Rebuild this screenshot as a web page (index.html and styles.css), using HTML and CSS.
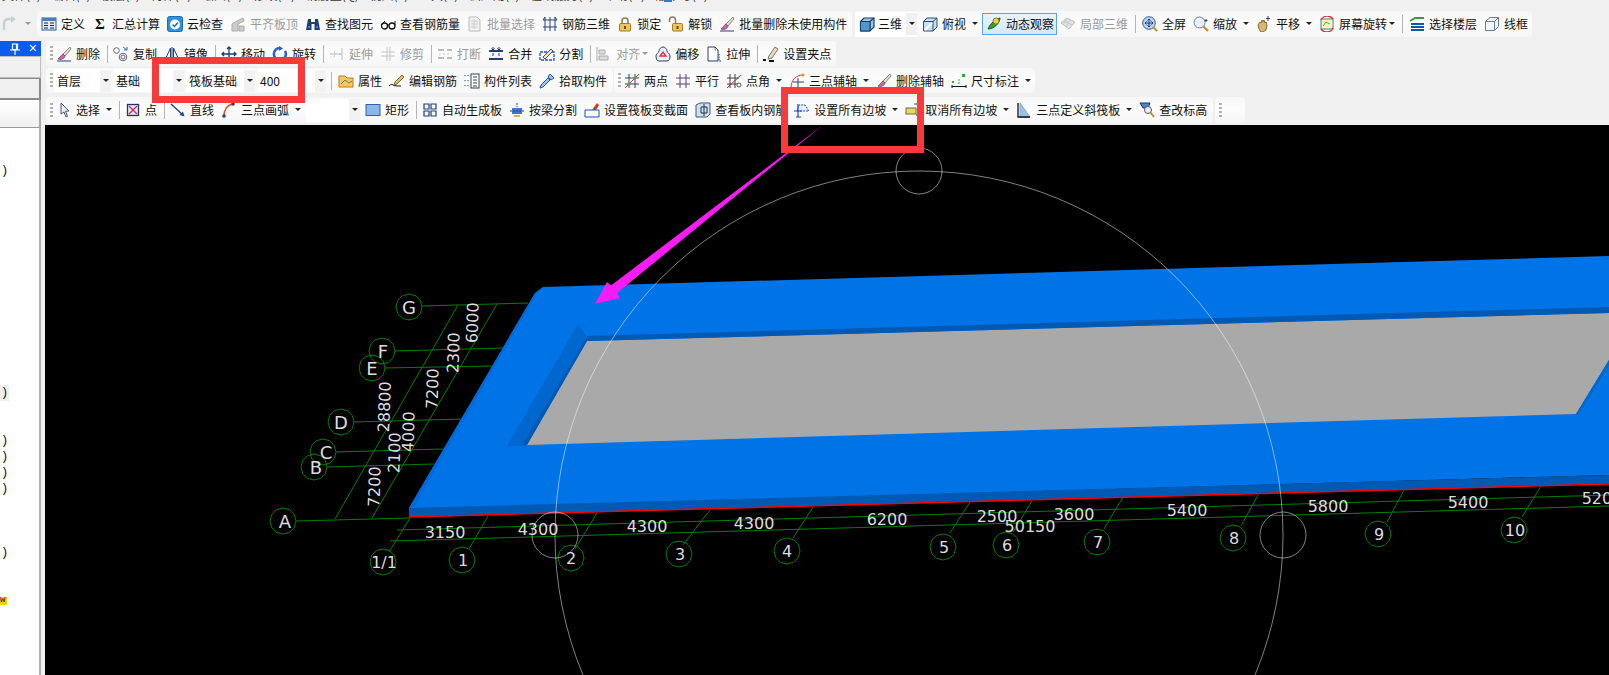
FILE: index.html
```html
<!DOCTYPE html>
<html lang="zh">
<head>
<meta charset="utf-8">
<title>筏板基础</title>
<link rel="stylesheet" href="styles.css">
</head>
<body>
<svg class="defs" width="0" height="0" aria-hidden="true">
<symbol id="def" viewBox="0 0 16 16"><rect x="1" y="2" width="14" height="12" fill="#e4edf7" stroke="#2a5a96"/><rect x="1" y="2" width="14" height="3" fill="#4a7fc0"/><path d="M3 7h4M3 9.500h4M3 12h4M9 7h4M9 9.500h4M9 12h4" stroke="#223"/></symbol>
<symbol id="cloud" viewBox="0 0 16 16"><rect x="0.500" y="0.500" width="15" height="15" rx="2" fill="#2e8fe0" stroke="#1b6db5"/><circle cx="8" cy="8.500" r="5" fill="#fff"/><path d="M5.500 8.500l2 2 3.500-4" fill="none" stroke="#1b6db5" stroke-width="1.500"/></symbol>
<symbol id="aligntop" viewBox="0 0 16 16"><path d="M2 15V8l5-3 6-3 1 3-6 3v7zM9 15v-5h5v5z" fill="#ccc" stroke="#aaa"/></symbol>
<symbol id="binoc" viewBox="0 0 16 16"><path d="M3 3h3v3h4V3h3l2 11H9.500V8h-3v6H1z" fill="#1d3f78"/><path d="M3 11h2M11 11h2" stroke="#9db9e0"/></symbol>
<symbol id="glass" viewBox="0 0 16 16"><circle cx="4.500" cy="10" r="3" fill="none" stroke="#111" stroke-width="1.300"/><circle cx="12" cy="10" r="3" fill="none" stroke="#111" stroke-width="1.300"/><path d="M7.500 9h1.500M1.500 9L5 5M15 9V5" stroke="#111"/></symbol>
<symbol id="batch" viewBox="0 0 16 16"><path d="M2 1h8l3 3v11H2z" fill="#f2f2f2" stroke="#bbb"/><path d="M4 5h7M4 8h7M4 11h7M7 3v10" stroke="#ccc"/></symbol>
<symbol id="rebar" viewBox="0 0 16 16"><path d="M3 1v14M8 1v14M13 1v14M1 4h14M1 11h14M1 4l2-3M15 4l-2-3" stroke="#24407c" fill="none"/></symbol>
<symbol id="lock" viewBox="0 0 16 16"><path d="M5 8V5a3 3 0 016 0v3" fill="none" stroke="#8a7a5a" stroke-width="1.500"/><rect x="2.500" y="7.500" width="11" height="7.500" rx="1" fill="#eec45c" stroke="#a07c22"/><rect x="7" y="10" width="2" height="3" fill="#6a4f10"/></symbol>
<symbol id="unlock" viewBox="0 0 16 16"><path d="M1.500 6V4a3 3 0 016 0v4" fill="none" stroke="#8a7a5a" stroke-width="1.500"/><rect x="4.500" y="7.500" width="10" height="7.500" rx="1" fill="#eec45c" stroke="#a07c22"/><rect x="8.500" y="10" width="2" height="3" fill="#6a4f10"/></symbol>
<symbol id="brush" viewBox="0 0 16 16"><path d="M14 1L7 8l2 2 6-7z" fill="#e8dcc0" stroke="#8a8a8a"/><path d="M7 8c-2 1-2 3-5 5 3 1 6 0 7-3z" fill="#d9679b" stroke="#8a4a8a"/><path d="M1 15h14" stroke="#24407c"/></symbol>
<symbol id="cube" viewBox="0 0 16 16"><path d="M1.500 5.500L5 2h10v9l-4 4H1.500z" fill="#9cc6e8" stroke="#173f66" stroke-width="1.200"/><path d="M1.500 5.500H11V15M11 5.500L15 2" fill="none" stroke="#173f66" stroke-width="1.200"/><path d="M1.500 5.500H11V15H1.500z" fill="#4f97cf" stroke="#173f66"/></symbol>
<symbol id="cubetop" viewBox="0 0 16 16"><path d="M1.500 5.500L5 2h10v9l-4 4H1.500z" fill="#c9dff0" stroke="#2a4f7a"/><path d="M1.500 5.500H11V15M11 5.500L15 2" fill="none" stroke="#2a4f7a"/><path d="M3 14l7-7" stroke="#fff" stroke-width="2"/></symbol>
<symbol id="orbit" viewBox="0 0 16 16"><path d="M2 13C4 8 9 3 14 2 14 7 8 13 2 13z" fill="#3d9a3a" stroke="#1d5a20"/><circle cx="10" cy="5" r="3" fill="#e8d44a" stroke="#8a7a20"/></symbol>
<symbol id="part3d" viewBox="0 0 16 16"><path d="M1 7l6-5 8 4-6 7z" fill="#e2e2e2" stroke="#bbb"/><path d="M4 5l8 4M7 3l-4 6M10 4l-4 7" stroke="#c8c8c8"/></symbol>
<symbol id="fit" viewBox="0 0 16 16"><circle cx="7" cy="7" r="6.300" fill="#bcd2ea" stroke="#3a5f94"/><path d="M7 3v8M3 7h8M5.500 4.500L7 3l1.500 1.500M5.500 9.500L7 11l1.500-1.500M4.500 5.500L3 7l1.500 1.500M9.500 5.500L11 7 9.500 8.500" fill="none" stroke="#1d3f78"/><path d="M11.500 11.500L15 15" stroke="#c98a2a" stroke-width="2"/></symbol>
<symbol id="zoom" viewBox="0 0 16 16"><circle cx="6.500" cy="6.500" r="5.500" fill="#e8eff7" stroke="#6a7f99"/><path d="M3.500 4.500a3.500 3.500 0 013-1.500" stroke="#fff" fill="none"/><path d="M10.500 10.500L15 15" stroke="#c98a2a" stroke-width="2.200"/><path d="M13 3v3M11.500 4.500h3" stroke="#345"/></symbol>
<symbol id="pan" viewBox="0 0 16 16"><path d="M2 9l2-3 1 1 1-3 1 2 1-2 1 3 1-1 1 3-1 5-3 2H5l-2-3z" fill="#d8b878" stroke="#8a6a2a"/><path d="M12 0v5M10 2.500h4" stroke="#345"/></symbol>
<symbol id="rotscr" viewBox="0 0 16 16"><rect x="2" y="3" width="12" height="10" fill="#fff5b8" stroke="#38a"/><path d="M4 10l3-4 4 2" fill="none" stroke="#4a4"/><path d="M2 4a7 7 0 0112-1M14 12a7 7 0 01-12 1" fill="none" stroke="#e03030" stroke-width="1.300"/></symbol>
<symbol id="floors" viewBox="0 0 16 16"><path d="M1 5l5-3h9" fill="none" stroke="#3a9a3a" stroke-width="2"/><path d="M2 8h13M2 11h13M2 14h13" stroke="#1456a0" stroke-width="2"/></symbol>
<symbol id="wire" viewBox="0 0 16 16"><path d="M1.500 5.500L6 1.500h8.500v9L10.500 14.500h-9zM1.500 5.500h9v9M10.500 5.500l4-4" fill="#f4f8fc" stroke="#5a7fa8"/></symbol>
<symbol id="copy" viewBox="0 0 16 16"><circle cx="3.500" cy="4.500" r="2.800" fill="none" stroke="#667"/><circle cx="10" cy="11" r="3.800" fill="none" stroke="#667"/><circle cx="10" cy="11" r="2" fill="none" stroke="#667"/><path d="M10 1l4 3M14 1v3h-3" fill="none" stroke="#27a"/></symbol>
<symbol id="mirror" viewBox="0 0 16 16"><path d="M8 1v14M6.500 2L1 14h5.500zM9.500 2L15 14H9.500z" fill="none" stroke="#24407c"/></symbol>
<symbol id="move" viewBox="0 0 16 16"><path d="M8 1v14M1 8h14M6 3l2-2 2 2M6 13l2 2 2-2M3 6L1 8l2 2M13 6l2 2-2 2" fill="none" stroke="#1d3f78" stroke-width="1.300"/></symbol>
<symbol id="rotate" viewBox="0 0 16 16"><path d="M13 5a6 6 0 11-4-2.800" fill="none" stroke="#2a62c0" stroke-width="2.500"/><path d="M7 0l4 2.500L7 5z" fill="#2a62c0"/></symbol>
<symbol id="extend" viewBox="0 0 16 16"><path d="M1 8h9M13 2v12" stroke="#bbb" fill="none"/><path d="M10 7h3v2h-3zM5 5h1v6H5z" fill="#ccc"/></symbol>
<symbol id="trim" viewBox="0 0 16 16"><path d="M1 6h14M1 10h14M7 1v14M10 1v14" stroke="#c4c4c4"/></symbol>
<symbol id="break" viewBox="0 0 16 16"><path d="M1 4h6M10 4h5M1 12h6M10 12h5" stroke="#bbb" stroke-width="2"/><path d="M2 8h12" stroke="#ccc" stroke-dasharray="2 2"/></symbol>
<symbol id="merge" viewBox="0 0 16 16"><path d="M1 5h14M1 13h14" stroke="#1d3f78" stroke-width="2"/><path d="M5 1v3M3.500 2.500L5 4l1.500-1.500M11 1v3M9.500 2.500L11 4l1.500-1.500M5 10V7M11 10V7" stroke="#1d3f78" fill="none"/></symbol>
<symbol id="split" viewBox="0 0 16 16"><rect x="1" y="6" width="14" height="8" fill="none" stroke="#1a56d0" stroke-width="1.300" stroke-dasharray="3 1"/><path d="M4 11l8-8 2 2-8 8z" fill="#f0e0c0" stroke="#555"/></symbol>
<symbol id="align" viewBox="0 0 16 16"><path d="M1 1v14M3 4h6v4H3zM3 10h9v4H3z" fill="#ddd" stroke="#aaa"/></symbol>
<symbol id="offset" viewBox="0 0 16 16"><path d="M1 10c0-3 3-3 3-5s2-4 4-4 4 2 4 4 3 2 3 5-1 5-3 5H4c-2 0-3-2-3-5z" fill="#eef" stroke="#246"/><path d="M5 10l3-4 3 4z" fill="none" stroke="#d33" stroke-width="1.300"/></symbol>
<symbol id="stretch" viewBox="0 0 16 16"><path d="M2 1h7l3 3v11H2z" fill="#fff" stroke="#24407c"/><path d="M9 1v3h3M13 8v7h2" fill="none" stroke="#24407c" stroke-dasharray="1.500 1"/></symbol>
<symbol id="gripp" viewBox="0 0 16 16"><path d="M6 10l6-9 3 2-6 9-4 1z" fill="#e8dcc0" stroke="#777"/><path d="M0 14h3M6 15h5" stroke="#111" stroke-width="2"/></symbol>
<symbol id="prop" viewBox="0 0 16 16"><path d="M1 3h6l2 2h6v9H1z" fill="#f7c766" stroke="#c07a1a"/><path d="M3 11l4-4 4 3 3-2" fill="none" stroke="#775"/></symbol>
<symbol id="edit" viewBox="0 0 16 16"><path d="M6 9l7-7 2 2-7 7-3 1z" fill="#e8c050" stroke="#765"/><path d="M0 13c2-2 3-2 4-1s5 1 8 1" fill="none" stroke="#111"/></symbol>
<symbol id="list" viewBox="0 0 16 16"><path d="M1 2v2M1 7v2M1 12v2M4 2v2M4 7v2M4 12v2" stroke="#345" stroke-dasharray="1 .8"/><rect x="7" y="1" width="8" height="14" fill="#fff" stroke="#345"/><path d="M9 4h4M9 7h4M9 10h4M9 13h4" stroke="#345"/></symbol>
<symbol id="pick" viewBox="0 0 16 16"><path d="M11 1l4 4-3 2-3-3zM9 5l2 2-7 7-3 1 1-3z" fill="#9cc2ec" stroke="#2a5a9a"/></symbol>
<symbol id="twopt" viewBox="0 0 16 16"><path d="M5 1v14M11 1v14M1 5h14M1 11h14" stroke="#345"/><path d="M1 15L15 1" stroke="#d33"/><circle cx="5" cy="11" r="1.600" fill="#4a4"/><circle cx="11" cy="5" r="1.600" fill="#4a4"/></symbol>
<symbol id="para" viewBox="0 0 16 16"><path d="M5 1v14M11 1v14M1 5h14M1 11h14" stroke="#5a3f7c"/></symbol>
<symbol id="angle" viewBox="0 0 16 16"><path d="M4 1v14M9 1v14M1 5h12M1 11h12" stroke="#345"/><path d="M1 15L15 2" stroke="#e02020"/><circle cx="13" cy="12" r="2" fill="#fff" stroke="#555"/></symbol>
<symbol id="arcax" viewBox="0 0 16 16"><path d="M2 15C2 7 7 2 14 2" fill="none" stroke="#d33"/><path d="M9 5v10M4 9h11" stroke="#24407c"/><circle cx="14" cy="2" r="1.500" fill="#e83"/></symbol>
<symbol id="dim" viewBox="0 0 16 16"><path d="M1 12v3M15 12v3M1 13.500h14" stroke="#111"/><rect x="11" y="1" width="3" height="3" fill="#3a3"/><rect x="1" y="8" width="2" height="2" fill="#3a3"/><path d="M7 7h2M7 10h2" stroke="#3a3"/></symbol>
<symbol id="sel" viewBox="0 0 16 16"><path d="M5 1v11l3-2 2 5 1.500-.7-2-5 3.500-.3z" fill="#e4ecf7" stroke="#556"/></symbol>
<symbol id="pt" viewBox="0 0 16 16"><rect x="2.500" y="2.500" width="11" height="11" fill="#e4e8f4" stroke="#27306c" stroke-width="1.300"/><path d="M4 4l8 8M12 4l-8 8" stroke="#c03050" stroke-width="1.300"/></symbol>
<symbol id="ln" viewBox="0 0 16 16"><path d="M1 2l12 11" stroke="#234a88" stroke-width="1.500"/><path d="M14.500 14.500l-5-1.500 3.500-3.500z" fill="#234a88"/></symbol>
<symbol id="arc" viewBox="0 0 16 16"><path d="M3 14C3 8 6 3 12 2" fill="none" stroke="#e04a20" stroke-width="1.500"/><circle cx="3" cy="14" r="1.800" fill="#24407c"/><circle cx="12" cy="2" r="1.800" fill="#24407c"/></symbol>
<symbol id="rc" viewBox="0 0 16 16"><rect x="1" y="2.500" width="14" height="11" fill="#8ab6ea" stroke="#2a62b0"/></symbol>
<symbol id="auto" viewBox="0 0 16 16"><path d="M2 2h5v5H2zM9 2h5v5H9zM2 9h5v5H2zM9 9h5v5H9z" fill="#f4f8fc" stroke="#24407c" stroke-width="1.200"/></symbol>
<symbol id="beam" viewBox="0 0 16 16"><rect x="3" y="6" width="10" height="6" fill="#3a7ad0"/><path d="M1 9h14M8 1v4" stroke="#24407c" stroke-dasharray="2 1"/><rect x="5" y="13" width="6" height="2" fill="#e8b040"/></symbol>
<symbol id="sect" viewBox="0 0 16 16"><path d="M1 8h14v7H1z" fill="#fff" stroke="#1a4ac0"/><path d="M8 8l5-7 2 2-3 5z" fill="#e03020"/></symbol>
<symbol id="view" viewBox="0 0 16 16"><path d="M1 3l4-2h10v11l-3 3H1z" fill="#cfe0f0" stroke="#3a5a80"/><path d="M6 5h6v6H6zM9 2v12" fill="none" stroke="#234"/></symbol>
<symbol id="slope" viewBox="0 0 16 16"><path d="M3 9h9l3 0-4-6H5z" fill="#eaf1fa" stroke="#1a4ac0" stroke-dasharray="2 1"/><path d="M4 2v13M0 9h8M2 15h5" fill="none" stroke="#1a4ac0" stroke-width="1.200"/></symbol>
<symbol id="unslope" viewBox="0 0 16 16"><rect x="1" y="6" width="10" height="6" fill="#e8d860" stroke="#665"/><path d="M9 2h6v11h-4" fill="none" stroke="#24407c"/></symbol>
<symbol id="tri" viewBox="0 0 16 16"><path d="M4 1v14h10z" fill="#9cc2ec" stroke="#8ab"/><path d="M2 1v14h12" fill="none" stroke="#111" stroke-width="1.300"/></symbol>
<symbol id="chk" viewBox="0 0 16 16"><path d="M1 1h10l-2 5H4z" fill="#4a86d0" stroke="#234"/><circle cx="9" cy="8" r="3.500" fill="#eef" stroke="#556"/><path d="M11.500 10.500L15 15" stroke="#c98a2a" stroke-width="2"/></symbol>
<symbol id="undo" viewBox="0 0 16 16"><path d="M3 14V7c0-3 3-4 6-4h2" fill="none" stroke="#c8d0d4" stroke-width="2.500"/><path d="M10 0l5 3-5 4z" fill="#c8d0d4"/></symbol>
<symbol id="pinn" viewBox="0 0 10 12"><path d="M2.500 1h5v5.500h-5zM0 7h10M5 7v5M6.500 1v5.500" fill="none" stroke="#fff" stroke-width="1.200"/></symbol>
</svg>

<div class="menu-strip"><span class="menu-text">文件(F) 编辑(E) 楼层(L) 构件(N) 绘图(D) 修改(M) 钢筋量(Q) 视图(V) 工具(T) 云应用(Y) 在线服务(S) 帮助(H) 版本号(B)</span><i class="menu-dot"></i></div>

<div class="row row1">
  <div class="undo"><svg class="i"><use href="#undo"/></svg><i class="car off"></i></div>
  <div class="tb tb-a">
    <div class="b"><svg class="i"><use href="#def"/></svg><span>定义</span></div>
    <div class="b"><span class="i sigma">Σ</span><span>汇总计算</span></div>
    <div class="b"><svg class="i"><use href="#cloud"/></svg><span>云检查</span></div>
    <div class="b off"><svg class="i"><use href="#aligntop"/></svg><span>平齐板顶</span></div>
    <div class="b"><svg class="i"><use href="#binoc"/></svg><span>查找图元</span></div>
    <div class="b"><svg class="i"><use href="#glass"/></svg><span>查看钢筋量</span></div>
    <div class="b off"><svg class="i"><use href="#batch"/></svg><span>批量选择</span></div>
    <div class="b"><svg class="i"><use href="#rebar"/></svg><span>钢筋三维</span></div>
    <div class="b"><svg class="i"><use href="#lock"/></svg><span>锁定</span></div>
    <div class="b"><svg class="i"><use href="#unlock"/></svg><span>解锁</span></div>
    <div class="b"><svg class="i"><use href="#brush"/></svg><span>批量删除未使用构件</span></div>
  </div>
  <div class="tb tb-b">
    <div class="b hot-split"><svg class="i"><use href="#cube"/></svg><span>三维</span><i class="car boxed"></i></div>
    <div class="b"><svg class="i"><use href="#cubetop"/></svg><span>俯视</span><i class="car"></i></div>
    <div class="b active"><svg class="i"><use href="#orbit"/></svg><span>动态观察</span></div>
    <div class="b off"><svg class="i"><use href="#part3d"/></svg><span>局部三维</span></div>
    <i class="sep"></i>
    <div class="b"><svg class="i"><use href="#fit"/></svg><span>全屏</span></div>
    <div class="b"><svg class="i"><use href="#zoom"/></svg><span>缩放</span><i class="car"></i></div>
    <div class="b"><svg class="i"><use href="#pan"/></svg><span>平移</span><i class="car"></i></div>
    <div class="b"><svg class="i"><use href="#rotscr"/></svg><span>屏幕旋转</span><i class="car tight"></i></div>
    <i class="sep"></i>
    <div class="b"><svg class="i"><use href="#floors"/></svg><span>选择楼层</span></div>
    <div class="b"><svg class="i"><use href="#wire"/></svg><span>线框</span></div>
  </div>
</div>

<div class="work">
  <aside class="side">
    <div class="side-title"><svg class="pin"><use href="#pinn"/></svg><span class="side-x">×</span></div>
    <div class="side-btn"></div>
    <div class="side-btn side-btn-on"></div>
    <div class="side-head"></div>
    <div class="side-list">
      <div class="tr tr-first">)</div>
      <div class="tr"></div><div class="tr"></div><div class="tr"></div><div class="tr"></div><div class="tr"></div><div class="tr"></div><div class="tr"></div>
      <div class="tr"></div><div class="tr"></div><div class="tr"></div><div class="tr"></div><div class="tr"></div><div class="tr"></div>
      <div class="tr tr-sel">)</div>
      <div class="tr"></div><div class="tr"></div>
      <div class="tr">)</div>
      <div class="tr">)</div>
      <div class="tr">)</div>
      <div class="tr">)</div>
      <div class="tr"></div><div class="tr"></div><div class="tr"></div>
      <div class="tr">)</div>
      <div class="tr"></div><div class="tr"></div>
      <div class="tr tr-warn"><span>w</span></div>
    </div>
  </aside>

  <main class="main">
    <div class="row row2">
      <div class="tb tb-c">
        <i class="grip"></i>
        <div class="b"><svg class="i"><use href="#brush"/></svg><span>删除</span></div><i class="sep"></i>
        <div class="b"><svg class="i"><use href="#copy"/></svg><span>复制</span></div>
        <div class="b"><svg class="i"><use href="#mirror"/></svg><span>镜像</span></div><i class="sep"></i>
        <div class="b"><svg class="i"><use href="#move"/></svg><span>移动</span></div>
        <div class="b"><svg class="i"><use href="#rotate"/></svg><span>旋转</span></div><i class="sep"></i>
        <div class="b off"><svg class="i"><use href="#extend"/></svg><span>延伸</span></div>
        <div class="b off"><svg class="i"><use href="#trim"/></svg><span>修剪</span></div><i class="sep"></i>
        <div class="b off"><svg class="i"><use href="#break"/></svg><span>打断</span></div>
        <div class="b"><svg class="i"><use href="#merge"/></svg><span>合并</span></div>
        <div class="b"><svg class="i"><use href="#split"/></svg><span>分割</span></div><i class="sep"></i>
        <div class="b off"><svg class="i"><use href="#align"/></svg><span>对齐</span><i class="car tight off"></i></div>
        <div class="b"><svg class="i"><use href="#offset"/></svg><span>偏移</span></div>
        <div class="b"><svg class="i"><use href="#stretch"/></svg><span>拉伸</span></div><i class="sep"></i>
        <div class="b"><svg class="i"><use href="#gripp"/></svg><span>设置夹点</span></div>
      </div>
    </div>

    <div class="row row3">
      <div class="tb tb-d">
        <i class="grip"></i>
        <div class="combo c57"><span>首层</span><i class="car combo-btn"></i></div>
        <div class="combo c71"><span>基础</span><i class="car combo-btn"></i></div>
        <div class="combo c69"><span>筏板基础</span><i class="car combo-btn"></i></div>
        <div class="combo c69"><span>400</span><i class="car combo-btn"></i></div>
        <i class="sep"></i>
        <div class="b"><svg class="i"><use href="#prop"/></svg><span>属性</span></div>
        <div class="b"><svg class="i"><use href="#edit"/></svg><span>编辑钢筋</span></div>
        <div class="b"><svg class="i"><use href="#list"/></svg><span>构件列表</span></div>
        <div class="b"><svg class="i"><use href="#pick"/></svg><span>拾取构件</span></div>
      </div>
      <div class="tb tb-e">
        <i class="grip"></i>
        <div class="b"><svg class="i"><use href="#twopt"/></svg><span>两点</span></div>
        <div class="b"><svg class="i"><use href="#para"/></svg><span>平行</span></div>
        <div class="b"><svg class="i"><use href="#angle"/></svg><span>点角</span><i class="car"></i></div>
        <div class="b"><svg class="i"><use href="#arcax"/></svg><span>三点辅轴</span><i class="car"></i></div>
        <div class="b"><svg class="i"><use href="#brush"/></svg><span>删除辅轴</span></div>
        <div class="b"><svg class="i"><use href="#dim"/></svg><span>尺寸标注</span><i class="car"></i></div>
      </div>
    </div>

    <div class="row row4">
      <div class="tb tb-f">
        <i class="grip"></i>
        <div class="b"><svg class="i"><use href="#sel"/></svg><span>选择</span><i class="car"></i></div><i class="sep"></i>
        <div class="b"><svg class="i"><use href="#pt"/></svg><span>点</span></div><i class="sep"></i>
        <div class="b"><svg class="i"><use href="#ln"/></svg><span>直线</span></div>
        <div class="b"><svg class="i"><use href="#arc"/></svg><span>三点画弧</span><i class="car"></i></div>
        <div class="combo c56"><span></span><i class="car combo-btn"></i></div>
        <div class="b"><svg class="i"><use href="#rc"/></svg><span>矩形</span></div><i class="sep"></i>
        <div class="b"><svg class="i"><use href="#auto"/></svg><span>自动生成板</span></div>
        <div class="b"><svg class="i"><use href="#beam"/></svg><span>按梁分割</span></div>
        <div class="b"><svg class="i"><use href="#sect"/></svg><span>设置筏板变截面</span></div>
        <div class="b"><svg class="i"><use href="#view"/></svg><span>查看板内钢筋</span></div>
        <div class="b"><svg class="i"><use href="#slope"/></svg><span>设置所有边坡</span><i class="car"></i></div>
        <div class="b"><svg class="i"><use href="#unslope"/></svg><span>取消所有边坡</span><i class="car"></i></div>
        <div class="b"><svg class="i"><use href="#tri"/></svg><span>三点定义斜筏板</span><i class="car"></i></div>
        <div class="b"><svg class="i"><use href="#chk"/></svg><span>查改标高</span></div>
      </div>
      <div class="tb tb-g"><i class="grip"></i></div>
    </div>

    <div class="canvas">
      <svg class="scene" viewBox="45 125 1564 550" width="1564" height="550">
        <defs>
          <polygon id="bub" points="13,0 11.300,6.500 6.500,11.300 0,13 -6.500,11.300 -11.300,6.500 -13,0 -11.300,-6.500 -6.500,-11.300 0,-13 6.500,-11.300 11.300,-6.500"/>
        </defs>
        <!-- slab -->
        <polygon class="s-blue" points="409,508 535,293 543,287 1609,256 1609,475 409,509"/>
        <polygon class="s-edge" points="409,508 535,293 539,290 414,507"/>
        <polygon class="s-gray" points="527,445 587,341 1609,313 1609,360 1576,414"/>
        <polygon class="s-wall" points="578,324 587,337 526,446 507,446"/>
        <polygon class="s-dark" points="587,336 1609,307 1609,313 587,341"/>
        <polygon class="s-dark" points="587,337 587,341 527,445 522,445"/>
        <polygon class="s-wall" points="1576,414 1609,360 1609,365 1579,414"/>
        <polygon class="s-dark" points="409,508 1609,475 1609,484 409,517"/>
        <line class="red" x1="409" y1="517" x2="1609" y2="484"/>

        <!-- grid -->
        <g class="grid">
          <path d="M422 306L528 303M395 351L502 348M385 368L492 366M354 422L462 419M336 452L443 449M327 467L434 464M296 521L409 518"/>
          <path d="M335 519L458 305M372 518L497 304"/>
          <path d="M397 530L1609 495M390 541L1609 506"/>
          <path d="M389 552L410 518M469 549L488 516M575 549L597 513M683 545L710 510M793 538L813 507M950 533L970 502M1013 532L1032 501M1104 529L1123 497M1241 526L1258 495M1387 522L1404 490M1522 517L1541 486"/>
          <use href="#bub" x="409" y="307"/><use href="#bub" x="382" y="351"/><use href="#bub" x="372" y="368"/><use href="#bub" x="341" y="422"/><use href="#bub" x="323" y="452"/><use href="#bub" x="314" y="467"/><use href="#bub" x="283" y="521"/>
          <use href="#bub" x="383" y="562"/><use href="#bub" x="462" y="560"/><use href="#bub" x="571" y="558"/><use href="#bub" x="679" y="554"/><use href="#bub" x="787" y="551"/><use href="#bub" x="943" y="547"/><use href="#bub" x="1006" y="545"/><use href="#bub" x="1097" y="542"/><use href="#bub" x="1233" y="538"/><use href="#bub" x="1378" y="534"/><use href="#bub" x="1514" y="530"/>
        </g>

        <!-- orbit gizmo -->
        <g class="gizmo">
          <circle cx="919" cy="535" r="364"/>
          <circle cx="919" cy="171" r="23"/>
          <circle cx="555" cy="535" r="23"/>
          <circle cx="1283" cy="535" r="23"/>
        </g>

        <!-- labels -->
        <g class="lab-axis">
          <text x="409" y="313.500">G</text><text x="383" y="357.500">F</text><text x="372" y="374.500">E</text><text x="341" y="428.500">D</text><text x="326" y="458.500">C</text><text x="316" y="473.500">B</text><text x="285" y="527.500">A</text>
          <text class="num" x="384" y="568">1/1</text><text class="num" x="463" y="566">1</text><text class="num" x="571" y="564">2</text><text class="num" x="680" y="560">3</text><text class="num" x="787" y="557">4</text><text class="num" x="944" y="553">5</text><text class="num" x="1007" y="551">6</text><text class="num" x="1098" y="548">7</text><text class="num" x="1234" y="544">8</text><text class="num" x="1379" y="540">9</text><text class="num" x="1515" y="536">10</text>
        </g>
        <g class="lab-dim">
          <text x="445" y="538">3150</text><text x="538" y="535">4300</text><text x="647" y="532">4300</text><text x="754" y="529">4300</text><text x="887" y="525">6200</text><text x="997" y="522">2500</text><text x="1030" y="532">50150</text><text x="1074" y="520">3600</text><text x="1187" y="516">5400</text><text x="1328" y="512">5800</text><text x="1468" y="508">5400</text><text x="1602" y="504">5200</text>
          <text transform="translate(478 323) rotate(-88)">6000</text>
          <text transform="translate(459 353) rotate(-88)">2300</text>
          <text transform="translate(438 389) rotate(-88)">7200</text>
          <text transform="translate(390 407) rotate(-88)">28800</text>
          <text transform="translate(414 432) rotate(-88)">4000</text>
          <text transform="translate(400 453) rotate(-88)">2100</text>
          <text transform="translate(380 487) rotate(-88)">7200</text>
        </g>

        <polygon class="arrow" points="595,304 607,282 611,285.500 823,125 617,293 620,298"/>
      </svg>
    </div>
  </main>
</div>

<div class="mark mark-a"></div>
<div class="mark mark-b"></div>
</body>
</html>
```
FILE: styles.css
```css
* { box-sizing: border-box; }
html, body { margin: 0; height: 100%; }
body {
  position: relative;
  display: flex;
  flex-direction: column;
  height: 675px;
  overflow: hidden;
  background: #f0f0f0;
  color: #111;
  font: 12px/16px "Noto Sans CJK SC", "Liberation Sans", sans-serif;
}
.defs { position: absolute; }
i { display: block; font-style: normal; }

.menu-strip { position: relative; height: 11px; flex: none; overflow: hidden; }
.menu-text { display: block; margin: -13px 0 0 2px; word-spacing: 8px; white-space: nowrap; color: #333; }
.menu-dot { position: absolute; left: 664px; top: 0; width: 8px; height: 2px; background: #2e7cc8; }

.row { display: flex; flex: none; align-items: stretch; }
.row1 { height: 26px; margin-bottom: 4px; }
.row2 { height: 25px; margin-bottom: 2px; }
.row3 { height: 25px; margin-bottom: 4px; }
.row4 { height: 26px; margin-bottom: 2px; }

.undo { width: 37px; display: flex; align-items: center; padding-left: 1px; gap: 6px; }
.tb {
  display: flex;
  align-items: center;
  background: linear-gradient(#f7f7f7, #fcfcfc 45%, #f6f6f6);
  border-radius: 3px;
}
.tb-a { width: 815px; padding-left: 1px; }
.tb-b { width: 677px; margin-left: 3px; padding-left: 0; }
.tb-c { width: 790px; margin-left: 1px; padding-left: 4px; }
.tb-d { width: 567px; margin-left: 1px; padding-left: 4px; }
.tb-e { width: 421px; margin-left: 1px; padding-left: 4px; }
.tb-f { width: 1167px; margin-left: 1px; padding-left: 4px; }
.tb-g { width: 30px; margin-left: 2px; padding-left: 4px; }

.grip {
  flex: none;
  width: 3px;
  height: 15px;
  background: repeating-linear-gradient(#b0b0b0 0 2px, transparent 2px 4px);
}
.sep { flex: none; width: 1px; height: 18px; margin: 0 3px; background: #b4b4b4; }
.tb-c .sep, .tb-f .sep { margin: 0 2px 0 3px; }

.b {
  flex: none;
  display: flex;
  align-items: center;
  gap: 4px;
  height: 22px;
  padding: 0 4px 0 3px;
  white-space: nowrap;
}
.b.off { color: #9a9a9a; }
.i { flex: none; display: block; width: 16px; height: 16px; }
.sigma { font: bold 15px/16px "Liberation Serif", serif; text-align: center; color: #111; }

.active {
  background: linear-gradient(#e8f3fd, #d3e8fb);
  border: 1px solid #5ba6e6;
  padding: 0 3px;
  width: 75px;
}
.hot-split { background: #fff; padding: 0 0 0 4px; width: 62px; height: 25px; gap: 3px; margin-right: 2px; }

.car {
  flex: none;
  position: relative;
  width: 10px;
  height: 16px;
}
.b .car { margin-right: -2px; }
.car::after {
  content: "";
  position: absolute;
  left: 50%;
  top: 50%;
  margin: -2px 0 0 -3px;
  border: 3px solid transparent;
  border-top-color: #222;
  border-bottom-width: 0;
}
.car.off::after { border-top-color: #999; }
.b .car.tight { width: 7px; margin-left: -3px; margin-right: 0; }
.b .car.boxed { width: 11px; height: 22px; margin: 0 0 0 1px; background: #f0f0f0; }

.combo {
  flex: none;
  display: flex;
  align-items: center;
  justify-content: space-between;
  height: 23px;
  margin-right: 2px;
  padding-left: 3px;
  background: #fff;
  white-space: nowrap;
}
.combo-btn { width: 11px; height: 22px; background: #f2f2f2; }
.c57 { width: 57px; margin-left: 1px; }
.c71 { width: 71px; }
.c69 { width: 69px; }
.c56 { width: 54px; margin-left: 1px; margin-right: 2px; }

.work { flex: 1; min-height: 0; display: flex; }
.side { flex: none; width: 45px; display: flex; flex-direction: column; border-right: 4px solid #f0f0f0; }
.side-title {
  flex: none;
  height: 15px;
  display: flex;
  align-items: center;
  justify-content: flex-end;
  gap: 9px;
  padding-right: 4px;
  background: #0a5cf0;
  color: #fff;
}
.pin { width: 10px; height: 12px; }
.side-x { font: 14px/15px "Liberation Sans", sans-serif; }
.side-btn { flex: none; height: 22px; background: #f0f0f0; border: 1px solid #bdbdbd; border-left: 0; }
.side-btn-on { border-color: #8c8c8c; border-width: 1px 2px 2px 0; }
.side-head { flex: none; height: 28px; background: linear-gradient(#fff, #f0f0f0); border-right: 2px solid #aaa; border-bottom: 1px solid #999; }
.side-list { flex: 1; min-height: 0; padding-top: 33px; background: #fff; border-right: 2px solid #b0b0b0; overflow: hidden; }
.tr { height: 16px; padding-left: 1px; font: 12px/16px "Liberation Mono", monospace; color: #111; }
.tr-first { margin: 2px 0 -2px; }
.tr-sel { background: linear-gradient(90deg, #eee 9px, transparent 9px); }
.tr-warn { margin-top: 1px; margin-left: -1px; }
.tr-warn span { display: block; width: 7px; height: 8px; margin-top: 4px; overflow: hidden; background: #ffd000; font-size: 9px; line-height: 7px; }

.main { flex: 1; min-width: 0; display: flex; flex-direction: column; }
.canvas { flex: 1; min-height: 0; background: #000; overflow: hidden; }
.scene { display: block; }

.s-blue { fill: #0073e6; }
.s-edge { fill: #006bd8; }
.s-gray { fill: #a9a9a9; }
.s-wall { fill: #0067cf; }
.s-dark { fill: #005ab4; }
.red { stroke: #f00; stroke-width: 1.500; }
.grid { fill: none; stroke: #008000; stroke-width: 1; }
.gizmo { fill: none; stroke: #fff; stroke-opacity: .5; stroke-width: 1; }
.lab-axis, .lab-dim { font-family: "DejaVu Sans", sans-serif; fill: #ddd; text-anchor: middle; }
.lab-axis { font-size: 18px; }
.lab-axis .num { font-size: 16px; }
.lab-dim { font-size: 16px; }
.arrow { fill: #f81cf4; }

.mark { position: absolute; border: 7px solid #f93a3a; }
.mark-a { left: 152px; top: 57px; width: 153px; height: 46px; }
.mark-b { left: 781px; top: 87px; width: 143px; height: 66px; }
```
